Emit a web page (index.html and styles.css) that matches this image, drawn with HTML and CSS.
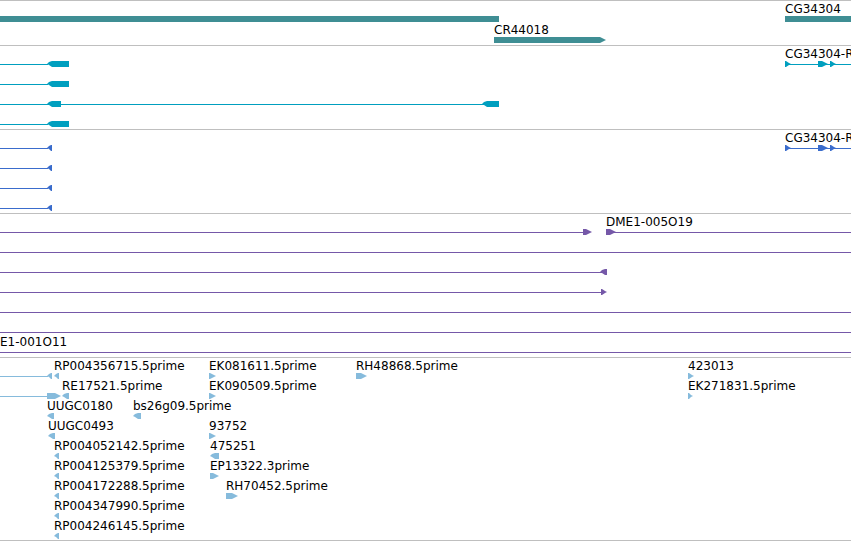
FILE: index.html
```html
<!DOCTYPE html>
<html lang="en">
<head>
    <meta charset="utf-8">
    <title>Genome tracks</title>
    <link rel="stylesheet" href="styles.css">
</head>
<body>
    <main id="tracks"></main>
    <script src="tracks.js"></script>
</body>
</html>
```

FILE: styles.css
```css
body
{
    margin:0;
    background-color:white;
    color:black;
    font-family:"DejaVu Sans", Verdana, sans-serif;
    font-size:12px;
    line-height:16px;
}
#tracks
{
    overflow:hidden;
    border-bottom:1px solid #bfbfbf;
}
.track
{
    border-top:1px solid #bfbfbf;
    padding-bottom:3px;
}
.gene
{
    color:#3f8e94;
    padding-bottom:2px;
}
.transcript
{
    color:#009fbf;
}
.cds
{
    color:#3a6ccc;
}
.bac
{
    color:#7558a8;
}
.est
{
    color:#86bbdc;
    padding-bottom:2px;
}
.row
{
    position:relative;
    height:20px;
}
.gene .row
{
    height:21px;
}
/* features sit at their sequence position inside the row */
.label
{
    position:absolute;
    top:0;
    color:black;
    white-space:nowrap;
}
.line
{
    position:absolute;
    top:18px;
    height:1px;
    background-color:currentColor;
}
.bar, .fwd, .rev
{
    position:absolute;
    top:15px;
    height:6px;
    background-color:currentColor;
}
.fwd
{
    clip-path:polygon(0 0, max(1px, calc(100% - 6px)) 0, calc(100% - 2px) 2px, 100% 3px, calc(100% - 2px) 4px, max(1px, calc(100% - 6px)) 100%, 0 100%);
}
.rev
{
    clip-path:polygon(100% 0, min(5px, calc(100% - 1px)) 0, 2px 1px, 0 3px, 2px 4px, min(5px, calc(100% - 1px)) 100%, 100% 100%);
}
```

FILE: tracks.js
```javascript
// feature: [kind, start, end, label], end of null runs on past the view
var tracks = [
    { name: "gene", rows: [
        [["bar", 0, 499], ["bar", 785, null, "CG34304"]],
        [["fwd", 494, 606, "CR44018"]]
    ]},
    { name: "transcript", rows: [
        [["line", 0, 48], ["rev", 47, 69],
         ["line", 785, null, "CG34304-RA"], ["fwd", 785, 791], ["fwd", 818, 828], ["fwd", 830, 836]],
        [["line", 0, 48], ["rev", 47, 69]],
        [["line", 0, 484], ["rev", 47, 61], ["rev", 482, 499]],
        [["line", 0, 48], ["rev", 47, 69]]
    ]},
    { name: "cds", rows: [
        [["line", 0, 48], ["rev", 47, 52],
         ["line", 785, null, "CG34304-RA"], ["fwd", 785, 791], ["fwd", 818, 828], ["fwd", 830, 836]],
        [["line", 0, 48], ["rev", 47, 52]],
        [["line", 0, 48], ["rev", 47, 52]],
        [["line", 0, 48], ["rev", 47, 52]]
    ]},
    { name: "bac", rows: [
        [["line", 0, 584], ["fwd", 583, 592], ["line", 606, null, "DME1-005O19"], ["fwd", 606, 616]],
        [["line", 0, null]],
        [["line", 0, 602], ["rev", 600, 607]],
        [["line", 0, 602], ["fwd", 601, 607]],
        [["line", 0, null]],
        [["line", 0, null]],
        [["line", 0, null, "E1-001O11"]]
    ]},
    { name: "est", rows: [
        [["line", 0, 48], ["rev", 47, 52], ["rev", 54, 59, "RP004356715.5prime"],
         ["fwd", 209, 216, "EK081611.5prime"], ["fwd", 356, 367, "RH48868.5prime"], ["fwd", 688, 694, "423013"]],
        [["line", 0, 48], ["fwd", 47, 61], ["rev", 62, 69, "RE17521.5prime"],
         ["fwd", 209, 216, "EK090509.5prime"], ["fwd", 688, 693, "EK271831.5prime"]],
        [["rev", 47, 54, "UUGC0180"], ["rev", 133, 141, "bs26g09.5prime"]],
        [["rev", 48, 55, "UUGC0493"], ["fwd", 209, 216, "93752"]],
        [["rev", 54, 59, "RP004052142.5prime"], ["rev", 210, 219, "475251"]],
        [["rev", 54, 59, "RP004125379.5prime"], ["fwd", 210, 219, "EP13322.3prime"]],
        [["rev", 54, 59, "RP004172288.5prime"], ["fwd", 226, 238, "RH70452.5prime"]],
        [["rev", 54, 59, "RP004347990.5prime"]],
        [["rev", 54, 59, "RP004246145.5prime"]]
    ]}
];

function add(parent, tag, cls)
{
    var el = document.createElement(tag);
    el.className = cls;
    parent.appendChild(el);
    return el;
}

function draw_feature(row, feature)
{
    var el = add(row, "div", feature[0]);
    el.style.left = feature[1] + "px";
    if (feature[2] === null)
    {
        el.style.right = "0";
    } else {
        el.style.width = (feature[2] - feature[1]) + "px";
    }
    if (feature[3])
    {
        var label = add(row, "span", "label");
        label.style.left = feature[1] + "px";
        label.textContent = feature[3];
    }
}

tracks.forEach(function (track)
{
    var section = add(document.getElementById("tracks"), "section", "track " + track.name);
    track.rows.forEach(function (features)
    {
        var row = add(section, "div", "row");
        features.forEach(function (feature)
        {
            draw_feature(row, feature);
        });
    });
});
```
